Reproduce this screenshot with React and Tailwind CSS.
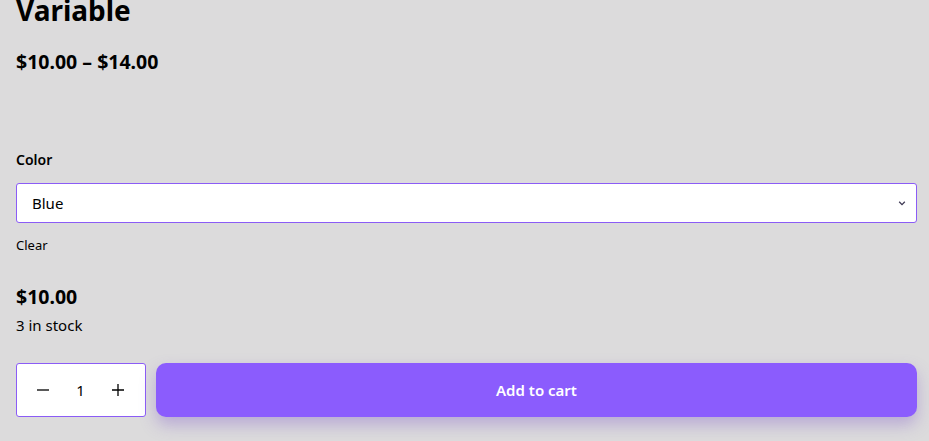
export default function App() {
  return (
    <div
      className="w-[929px] h-[441px] overflow-hidden bg-[#dcdbdc] text-black pl-4 pr-3"
      style={{ fontFamily: '"Noto Sans", "Open Sans", sans-serif' }}
    >
      <h1 className="text-[28px] font-bold leading-[32px] -mt-[6px]">Variable</h1>
      <p className="mt-[24px] text-[19.5px] font-bold leading-6">$10.00 – $14.00</p>

      <div className="mt-[76px]">
        <label className="block text-[14px] font-semibold leading-5">Color</label>
        <div className="relative mt-[13px]">
          <select className="w-full h-[40px] appearance-none bg-white border border-[#8b5cf6] rounded-[3px] pl-[15px] text-[15px] outline-none">
            <option>Blue</option>
          </select>
          <svg
            className="absolute right-[11px] top-1/2 -translate-y-1/2 w-[8px] h-[8px] text-[#3f3a55]"
            viewBox="0 0 10 10"
            fill="none"
            stroke="currentColor"
            strokeWidth="1.6"
          >
            <path d="M1.5 3.5 L5 7 L8.5 3.5" />
          </svg>
        </div>
        <button className="block mt-[12px] text-[13px] leading-5">Clear</button>
      </div>

      <div className="mt-[30px]">
        <p className="text-[19.5px] font-bold leading-6">$10.00</p>
        <p className="mt-[6px] text-[15px] leading-5">3 in stock</p>
      </div>

      <div className="mt-[28px] flex gap-[10px]">
        <div className="w-[130px] h-[54px] bg-white border border-[#8b5cf6] rounded-[3px] flex items-center justify-between pl-[20px] pr-[21px] text-[15px]">
          <svg className="w-[12px] h-[12px]" viewBox="0 0 12 12" stroke="currentColor" strokeWidth="1.3">
            <path d="M0 6 H12" />
          </svg>
          <span>1</span>
          <svg className="w-[12px] h-[12px]" viewBox="0 0 12 12" stroke="currentColor" strokeWidth="1.3">
            <path d="M0 6 H12 M6 0 V12" />
          </svg>
        </div>
        <button className="flex-1 h-[54px] rounded-[10px] bg-[#8b5cfd] text-white text-[15px] font-semibold shadow-[0_8px_16px_rgba(120,80,200,0.35)]">
          Add to cart
        </button>
      </div>
    </div>
  );
}
